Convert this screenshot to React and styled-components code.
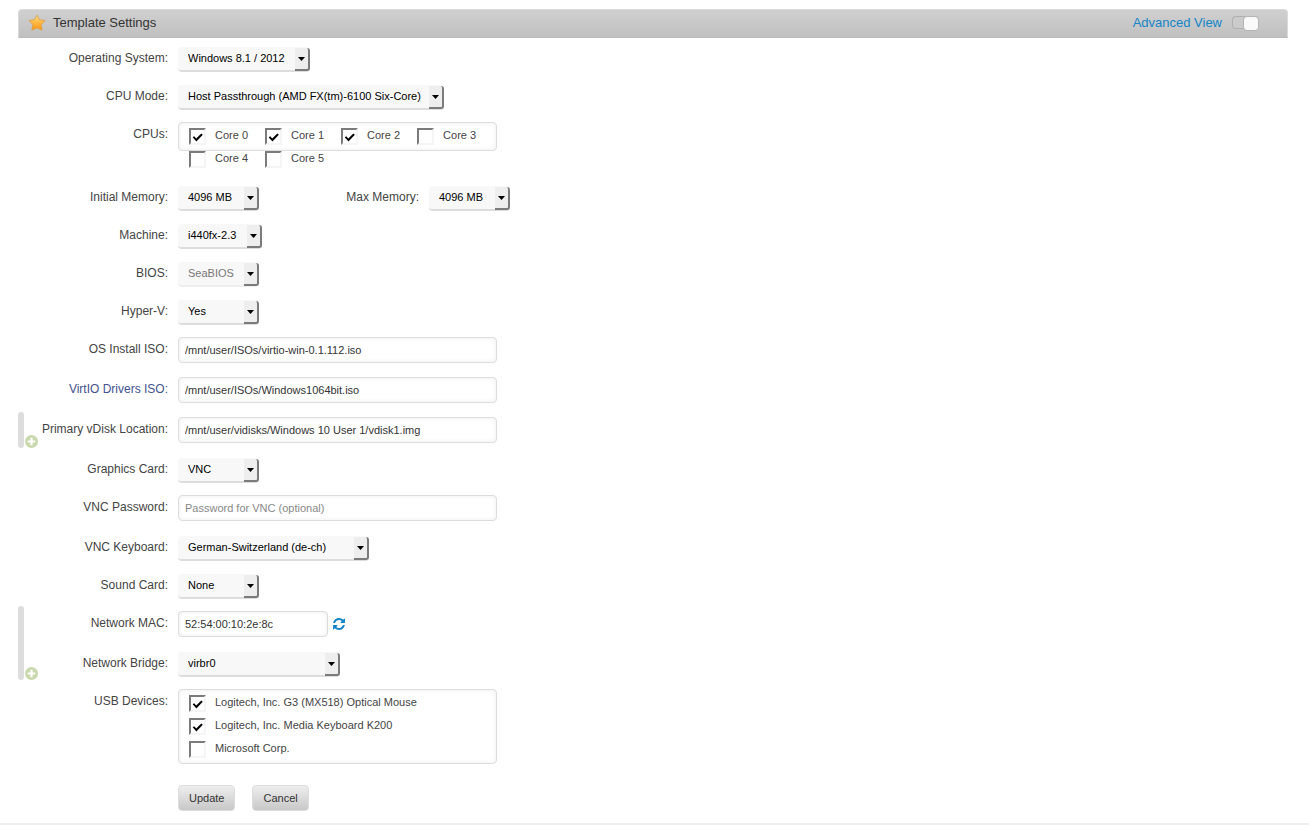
import React, { useId } from "react";
import styled, { createGlobalStyle } from "styled-components";

const GlobalStyle = createGlobalStyle`
  * { box-sizing: border-box; }
  body {
    margin: 0;
    background: #fff;
    color: #444;
    font: 12px/24px "Liberation Sans", Arial, sans-serif;
  }
  input, select, button { font-family: inherit; font-size: 11px; margin: 0; }
`;

const Page = styled.main`
  padding: 9px 21px 0 18px;
`;

const TitleBar = styled.header`
  display: flex;
  align-items: center;
  justify-content: space-between;
  height: 29px;
  margin-bottom: 8px;
  padding: 0 28px 2px 9px;
  border: 1px solid #dadada;
  border-bottom-color: #bababa;
  border-radius: 4px 4px 0 0;
  background: linear-gradient(#d0d0d0, #c0c0c0);
`;

const Title = styled.h1`
  display: flex;
  align-items: center;
  gap: 7px;
  margin: 0;
  color: #333;
  font-size: 13px;
  font-weight: normal;
`;

const ViewSwitch = styled.label`
  display: flex;
  align-items: center;
  gap: 10px;
  color: #1385c8;
  font-size: 13px;
  cursor: pointer;
`;

const Switch = styled.input`
  appearance: none;
  display: flex;
  width: 27px;
  height: 13px;
  border-radius: 4px;
  background: #cbcbcb;
  box-shadow: inset 0 0 0 1px #b0b0b0;
  justify-content: flex-end;

  &::before {
    content: "";
    width: 14px;
    height: 13px;
    border: 1px solid #b4b4b4;
    border-radius: 4px;
    background: #fafafa;
  }
  &:checked { justify-content: flex-start; }
`;

const Group = styled.section`
  display: grid;
  grid-template-columns: 22px 1fr;
`;

const Gutter = styled.div`
  display: flex;
  align-items: flex-end;
  gap: 1px;
  margin: -5px 0 9px;
`;

const Bar = styled.span`
  flex: none;
  align-self: stretch;
  width: 6px;
  border-radius: 3px;
  background: #ddd;
`;

const AddButton = styled.button`
  display: flex;
  padding: 0;
  border: 0;
  background: none;
  cursor: pointer;
`;

const Rows = styled.div`
  grid-column: 2;
`;

const Row = styled.div`
  display: flex;
  align-items: flex-start;
  gap: 10px;
  padding-bottom: ${(p) => p.$space ?? 12}px;
`;

const Label = styled.label`
  flex: none;
  width: ${(p) => p.$width ?? 128}px;
  color: ${(p) => (p.$accent ? "#42538f" : "#444")};
  text-align: right;
`;

const SelectFrame = styled.span`
  display: grid;
  width: ${(p) => p.$width}px;
  height: 26px;
  padding: 1px 0 0;
`;

const SelectBox = styled.select`
  grid-area: 1 / 1;
  appearance: none;
  width: 100%;
  height: 25px;
  padding: 0 20px 1px 10px;
  border: 0;
  border-bottom: 2px solid #ddd;
  border-radius: 4px;
  background: #f8f8f8;
  color: #000;
  &:disabled { color: #777; opacity: 1; border-bottom-color: #eee; }
`;

const Arrow = styled.span`
  grid-area: 1 / 1;
  justify-self: end;
  display: flex;
  align-items: center;
  justify-content: center;
  width: 15px;
  height: 23px;
  margin-top: 1px;
  border: solid #7b7b7b;
  border-width: 0 2px 2px 0;
  border-bottom-right-radius: 3px;
  border-top-right-radius: 3px;
  background: #eee;
  pointer-events: none;
`;

const TextBox = styled.input`
  width: ${(p) => p.$width ?? 319}px;
  height: 26px;
  padding: 0 6px;
  border: 1px solid #ddd;
  border-radius: 4px;
  background: #fff;
  box-shadow: inset 0 0 5px #eee;
  color: #333;
  &::placeholder { color: #888; opacity: 1; }
`;

const MacField = styled.div`
  display: flex;
  align-items: center;
  gap: 5px;
`;

const RefreshButton = styled(AddButton)`
  color: #1385c8;
`;

const OptionBox = styled.div`
  display: flex;
  flex-wrap: wrap;
  flex-direction: ${(p) => (p.$stacked ? "column" : "row")};
  align-content: flex-start;
  width: 319px;
  height: ${(p) => (p.$stacked ? "auto" : "29px")};
  padding: 1px 0 3px 10px;
  border: 1px solid #ddd;
  border-radius: 4px;
  box-shadow: inset 0 0 5px #eee;
`;

const Option = styled.label`
  display: flex;
  align-items: flex-start;
  gap: 9px;
  height: 23px;
  padding-right: 17px;
  font-size: 11px;
  line-height: 23px;
`;

const Tick = styled.input`
  appearance: none;
  display: grid;
  place-items: end center;
  width: 17px;
  height: 17px;
  margin-top: 4px;
  padding-bottom: 1px;
  border: 2px solid #f5f5f5;
  border-top-color: #7b7b7b;
  border-left-color: #7b7b7b;
  background: #fff;

  &:checked::before {
    content: "";
    width: 11px;
    height: 9px;
    background: #000;
    clip-path: polygon(6% 46%, 20% 36%, 38% 62%, 84% 6%, 98% 20%, 40% 94%);
  }
`;

const Actions = styled.div`
  display: flex;
  gap: 17px;
  padding: 9px 0 12px 138px;
`;

const Button = styled.button`
  height: 26px;
  padding: 0 10px;
  border: 1px solid #ddd;
  border-radius: 4px;
  background: linear-gradient(#eee, #c8c8c8);
  color: #333;
`;

const Footer = styled.footer`
  height: 2px;
  background: #eee;
`;

const StarIcon = () => (
  <svg width="18" height="18" viewBox="0 0 18 18" aria-hidden="true">
    <defs>
      <linearGradient id="star" x1="0" y1="0" x2="0" y2="1">
        <stop offset="0" stopColor="#ffe3a0" />
        <stop offset="0.4" stopColor="#ffc04d" />
        <stop offset="1" stopColor="#f99210" />
      </linearGradient>
    </defs>
    <path
      d="M9 1.2l2.500 4.500 5.500.9-3.800 4 .9 5.600L9 13.900l-5.100 2.300.9-5.600-3.800-4 5.500-.9z"
      fill="url(#star)"
      stroke="#dba04a"
      strokeWidth="0.900"
      strokeLinejoin="round"
    />
  </svg>
);

const PlusIcon = () => (
  <svg width="13" height="13" viewBox="0 0 13 13" aria-hidden="true">
    <circle cx="6.5" cy="6.5" r="6.5" fill="#c8d9ad" />
    <path d="M6.500 2.700v7.600M2.700 6.500h7.600" stroke="#fff" strokeWidth="2.200" />
  </svg>
);

const RefreshIcon = () => (
  <svg width="12" height="12" viewBox="0 0 1536 1536" fill="currentColor" aria-hidden="true">
    <path d="M1511 928q0 5-1 7-64 268-268 434.5t-478 166.5q-146 0-282.5-55t-243.5-157l-129 129q-19 19-45 19t-45-19-19-45v-448q0-26 19-45t45-19h448q26 0 45 19t19 45-19 45l-137 137q71 66 161 102t187 36q134 0 250-65t186-179q11-17 53-117 8-23 30-23h192q13 0 22.5 9.5t9.5 22.5zm25-800v448q0 26-19 45t-45 19h-448q-26 0-45-19t-19-45 19-45l138-138q-148-137-349-137-134 0-250 65t-186 179q-11 17-53 117-8 23-30 23h-199q-13 0-22.5-9.5t-9.5-22.5v-7q65-268 270-434.5t480-166.5q146 0 284 55.500t245 156.500l130-129q19-19 45-19t45 19 19 45z" />
  </svg>
);

function Select({ id, value, width = 81, disabled }) {
  return (
    <SelectFrame $width={width}>
      <SelectBox id={id} disabled={disabled}>
        <option>{value}</option>
      </SelectBox>
      <Arrow>
        <svg width="7" height="4" viewBox="0 0 7 4" aria-hidden="true">
          <path d="M0 0h7L3.500 4z" fill="#000" />
        </svg>
      </Arrow>
    </SelectFrame>
  );
}

function SelectRow({ label, ...rest }) {
  const id = useId();
  return (
    <Row>
      <Label htmlFor={id}>{label}</Label>
      <Select id={id} {...rest} />
    </Row>
  );
}

function TextRow({ label, accent, ...rest }) {
  const id = useId();
  return (
    <Row $space={14}>
      <Label htmlFor={id} $accent={accent}>{label}</Label>
      <TextBox id={id} type="text" {...rest} />
    </Row>
  );
}

function OptionsRow({ label, options, stacked, space }) {
  const id = useId();
  return (
    <Row $space={space}>
      <Label as="span" id={id}>{label}</Label>
      <OptionBox role="group" aria-labelledby={id} $stacked={stacked}>
        {options.map(([name, checked]) => (
          <Option key={name}>
            <Tick type="checkbox" defaultChecked={checked} />
            {name}
          </Option>
        ))}
      </OptionBox>
    </Row>
  );
}

function FieldGroup({ addLabel, children }) {
  return (
    <Group>
      {addLabel && (
        <Gutter>
          <Bar />
          <AddButton type="button" aria-label={addLabel}>
            <PlusIcon />
          </AddButton>
        </Gutter>
      )}
      <Rows>{children}</Rows>
    </Group>
  );
}

const cores = [
  ["Core 0", true],
  ["Core 1", true],
  ["Core 2", true],
  ["Core 3", false],
  ["Core 4", false],
  ["Core 5", false],
];

const usbDevices = [
  ["Logitech, Inc. G3 (MX518) Optical Mouse", true],
  ["Logitech, Inc. Media Keyboard K200", true],
  ["Microsoft Corp.", false],
];

export default function App() {
  return (
    <>
      <GlobalStyle />
      <Page>
        <TitleBar>
          <Title>
            <StarIcon />
            Template Settings
          </Title>
          <ViewSwitch>
            Advanced View
            <Switch type="checkbox" role="switch" />
          </ViewSwitch>
        </TitleBar>
        <form onSubmit={(e) => e.preventDefault()}>
          <FieldGroup>
            <SelectRow label="Operating System:" value="Windows 8.1 / 2012" width={132} />
            <SelectRow label="CPU Mode:" value="Host Passthrough (AMD FX(tm)-6100 Six-Core)" width={266} />
            <OptionsRow label="CPUs:" options={cores} space={34} />
            <Row>
              <Label htmlFor="initial-memory">Initial Memory:</Label>
              <Select id="initial-memory" value="4096 MB" />
              <Label htmlFor="max-memory" $width={150}>Max Memory:</Label>
              <Select id="max-memory" value="4096 MB" />
            </Row>
            <SelectRow label="Machine:" value="i440fx-2.3" width={84} />
            <SelectRow label="BIOS:" value="SeaBIOS" disabled />
            <SelectRow label="Hyper-V:" value="Yes" />
            <TextRow label="OS Install ISO:" defaultValue="/mnt/user/ISOs/virtio-win-0.1.112.iso" />
            <TextRow label="VirtIO Drivers ISO:" accent defaultValue="/mnt/user/ISOs/Windows1064bit.iso" />
          </FieldGroup>
          <FieldGroup addLabel="Add vDisk">
            <TextRow label="Primary vDisk Location:" defaultValue="/mnt/user/vidisks/Windows 10 User 1/vdisk1.img" />
          </FieldGroup>
          <FieldGroup>
            <SelectRow label="Graphics Card:" value="VNC" />
            <TextRow label="VNC Password:" placeholder="Password for VNC (optional)" />
            <SelectRow label="VNC Keyboard:" value="German-Switzerland (de-ch)" width={191} />
            <SelectRow label="Sound Card:" value="None" />
          </FieldGroup>
          <FieldGroup addLabel="Add network">
            <Row $space={14}>
              <Label htmlFor="mac">Network MAC:</Label>
              <MacField>
                <TextBox id="mac" type="text" $width={150} defaultValue="52:54:00:10:2e:8c" />
                <RefreshButton type="button" aria-label="Generate MAC">
                  <RefreshIcon />
                </RefreshButton>
              </MacField>
            </Row>
            <SelectRow label="Network Bridge:" value="virbr0" width={162} />
          </FieldGroup>
          <FieldGroup>
            <OptionsRow label="USB Devices:" options={usbDevices} stacked />
            <Actions>
              <Button type="submit">Update</Button>
              <Button type="button">Cancel</Button>
            </Actions>
          </FieldGroup>
        </form>
      </Page>
      <Footer />
    </>
  );
}
